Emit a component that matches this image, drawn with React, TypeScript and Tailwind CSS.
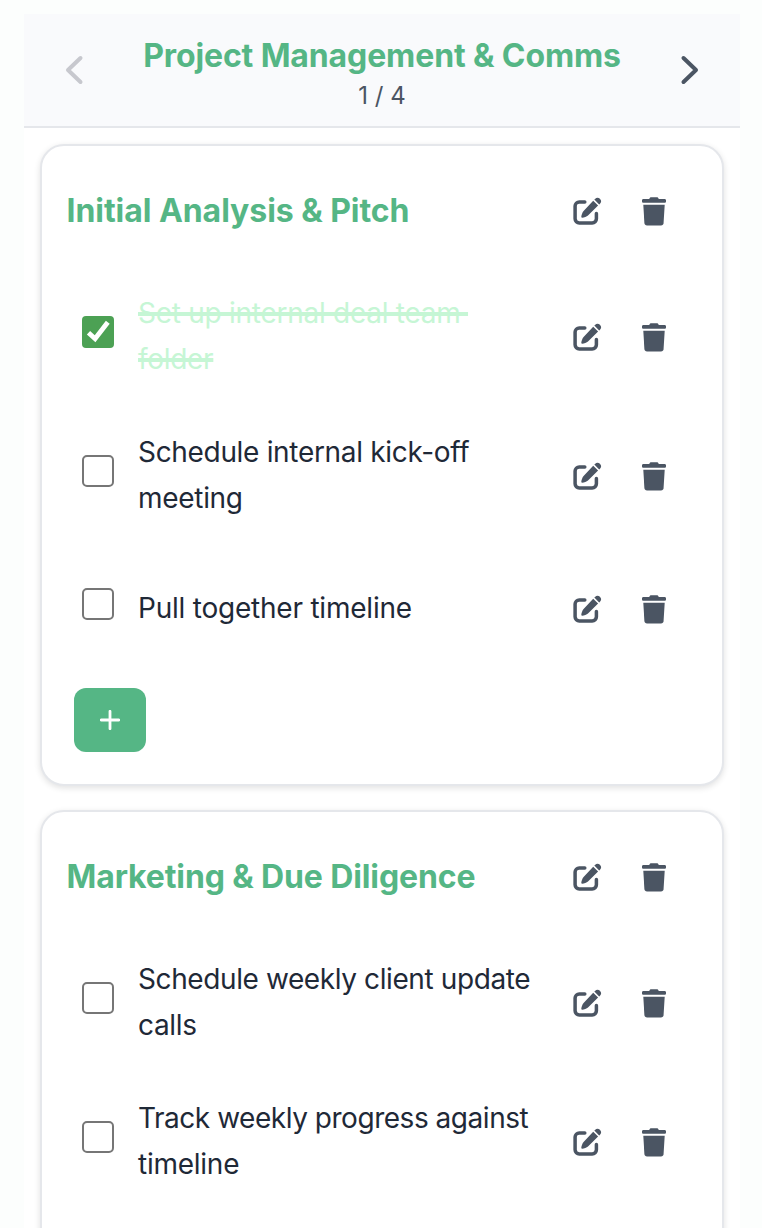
import React from "react";

function EditIcon() {
  return (
    <svg className="mt-[2px] ml-px" width="30" height="30" viewBox="0 0 30 30" fill="none">
      <path
        d="M11.800 4.900H6.300a4.200 4.200 0 0 0-4.200 4.200V21.800a4.200 4.200 0 0 0 4.200 4.200h12.900a4.200 4.200 0 0 0 4.200-4.200v-5.400"
        stroke="currentColor"
        strokeWidth="3.500"
        strokeLinecap="round"
      />
      <path
        d="M20.200 3.700 25.100 8.600 15 18.400c-1.200 1.100-4 2.200-5.800 2.300-.6 0-.9-.3-.9-.9.1-1.700 1.200-4.600 2.300-5.700Z"
        fill="currentColor"
      />
      <path
        d="m21.300 2.600.7-.7c1.500-1.500 3.500-1.500 4.900-.1l.2.2c1.400 1.400 1.400 3.300-.1 4.800l-.8.8Z"
        fill="currentColor"
      />
    </svg>
  );
}

function TrashIcon() {
  return (
    <svg width="26" height="30" viewBox="0 0 26 30" fill="currentColor">
      <path d="M8.300 2.900C8.500 1.700 9.300 1.200 10.200 1.200h5.600c.9 0 1.700.5 1.900 1.700H23.500c.9 0 1.500.6 1.500 1.400v1.100c0 .8-.6 1.400-1.500 1.400h-21C1.600 6.800 1 6.200 1 5.400V4.300c0-.8.6-1.400 1.500-1.400Z" />
      <path d="M2.300 8.700h21.400L22.600 27c-.1 1.500-1.100 2.400-2.600 2.400H6c-1.500 0-2.500-.9-2.600-2.400Z" />
    </svg>
  );
}

function Actions() {
  return (
    <div className="flex shrink-0 items-center text-[#4b5563]">
      <button aria-label="Edit" className="flex h-20 w-[66px] items-center justify-center">
        <EditIcon />
      </button>
      <button aria-label="Delete" className="flex h-20 w-[68px] items-center justify-center">
        <TrashIcon />
      </button>
    </div>
  );
}

function Checkbox({ checked }: { checked?: boolean }) {
  if (checked) {
    return (
      <span className="mb-[10px] flex size-8 shrink-0 rounded-[4px] bg-[#4ca154]">
        <svg width="32" height="32" viewBox="0 0 32 32" fill="none">
          <path d="m6.500 16.800 6.600 6L25.800 6.300" stroke="white" strokeWidth="4.800" />
        </svg>
      </span>
    );
  }
  return <span className="mb-[10px] size-8 shrink-0 rounded-[5px] border-2 border-[#767676] bg-white" />;
}

type Task = { lines: { text: string; tracking: string }[]; done?: boolean };

function TaskRow({ task }: { task: Task }) {
  return (
    <li className="flex items-center py-6 pl-4">
      <Checkbox checked={task.done} />
      <p
        className={`ml-6 w-0 flex-1 text-[28px] leading-[45.5px] whitespace-pre ${
          task.done ? "text-[#c6f6d5] line-through decoration-[4px]" : "text-[#1f2937]"
        }`}
      >
        {task.lines.map((line, i) => (
          <React.Fragment key={line.text}>
            {i > 0 && <br />}
            <span className={line.tracking}>{line.text}</span>
          </React.Fragment>
        ))}
      </p>
      <Actions />
    </li>
  );
}

function Card({ title, titleClass, tasks, addable }: { title: string; titleClass: string; tasks: Task[]; addable?: boolean }) {
  return (
    <section
      className={`rounded-[24px] border-2 border-[#e5e7eb] bg-white pt-[25px] pr-[34px] pl-6 shadow-[0_2px_6px_rgba(0,0,0,0.12)] ${
        addable ? "pb-8" : "pb-28"
      }`}
    >
      <header className="mb-4 flex h-20 items-center justify-between">
        <h2 className={`pl-[0.5px] whitespace-nowrap text-[32px] leading-10 font-bold text-[#55b685] ${titleClass}`}>{title}</h2>
        <Actions />
      </header>
      <ul>
        {tasks.map((task) => (
          <TaskRow key={task.lines[0].text} task={task} />
        ))}
      </ul>
      {addable && (
        <button
          aria-label="Add task"
          className="mt-[15px] ml-2 flex h-16 w-[72px] items-center justify-center rounded-[12px] bg-[#55b685]"
        >
          <svg width="20" height="20" viewBox="0 0 20 20" fill="none">
            <path d="M10 1.300v17.400M1.300 10h17.400" stroke="white" strokeWidth="2.800" strokeLinecap="round" />
          </svg>
        </button>
      )}
    </section>
  );
}

const analysis: Task[] = [
  {
    lines: [
      { text: "Set up internal deal team ", tracking: "tracking-[-0.27px]" },
      { text: "folder", tracking: "tracking-[-0.3px]" },
    ],
    done: true,
  },
  {
    lines: [
      { text: "Schedule internal kick-off", tracking: "tracking-[-0.32px]" },
      { text: "meeting", tracking: "tracking-[-0.3px]" },
    ],
  },
  { lines: [{ text: "Pull together timeline", tracking: "tracking-[-0.22px]" }] },
];

const marketing: Task[] = [
  {
    lines: [
      { text: "Schedule weekly client update", tracking: "tracking-[-0.4px]" },
      { text: "calls", tracking: "tracking-[-0.35px]" },
    ],
  },
  {
    lines: [
      { text: "Track weekly progress against", tracking: "tracking-[-0.47px]" },
      { text: "timeline", tracking: "tracking-[-0.25px]" },
    ],
  },
];

export default function App() {
  return (
    <div className="h-[1228px] overflow-hidden bg-[#fcfefd] pt-[14px] pr-[22px] pl-6 font-['Inter',sans-serif]">
      <main className="bg-white">
        <header className="flex h-[114px] items-center justify-between border-b-2 border-[#e5e7eb] bg-[#f9fafc] px-[38px]">
          <button aria-label="Previous" className="text-[#c7c8ce]">
            <svg width="24" height="32" viewBox="0 0 24 32" fill="none">
              <path d="M18.500 4 6 16l12.500 12" stroke="currentColor" strokeWidth="4" strokeLinecap="round" strokeLinejoin="round" />
            </svg>
          </button>
          <div className="flex flex-col items-center pt-[11px]">
            <h1 className="whitespace-nowrap text-[32px] leading-10 font-bold tracking-[-0.12px] text-[#55b685]">
              Project Management &amp; Comms
            </h1>
            <p className="text-[24px] leading-10 text-[#4b5563]">1 / 4</p>
          </div>
          <button aria-label="Next" className="text-[#4b5563]">
            <svg width="24" height="32" viewBox="0 0 24 32" fill="none">
              <path d="M5.500 4 18 16 5.500 28" stroke="currentColor" strokeWidth="4" strokeLinecap="round" strokeLinejoin="round" />
            </svg>
          </button>
        </header>
        <div className="flex flex-col gap-6 p-4">
          <Card title="Initial Analysis & Pitch" titleClass="tracking-[-0.05px]" tasks={analysis} addable />
          <Card title="Marketing & Due Diligence" titleClass="tracking-[-0.12px]" tasks={marketing} />
        </div>
      </main>
    </div>
  );
}
